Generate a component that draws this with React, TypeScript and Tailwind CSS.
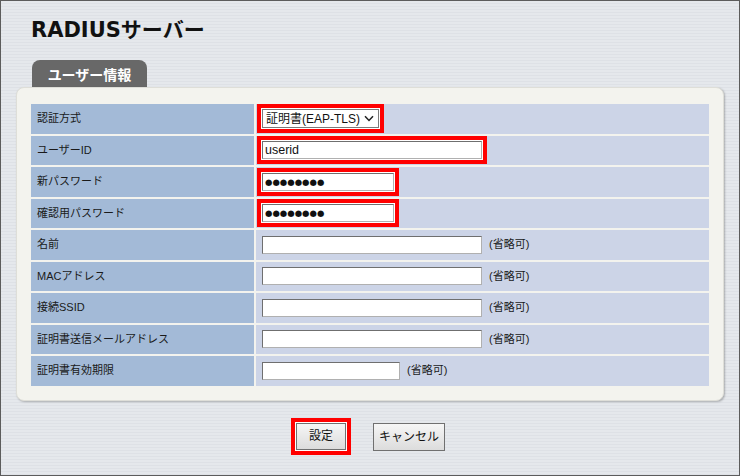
import React from 'react';

type Row = {
  label: string;
  kind: 'select' | 'text' | 'password';
  value?: string;
  width: string;
  marked?: boolean;
  optional?: boolean;
};

const rows: Row[] = [
  { label: '認証方式', kind: 'select', value: '証明書(EAP-TLS)', width: 'w-[117px]', marked: true },
  { label: 'ユーザーID', kind: 'text', value: 'userid', width: 'w-[220px]', marked: true },
  { label: '新パスワード', kind: 'password', value: '●●●●●●●●', width: 'w-[132px]', marked: true },
  { label: '確認用パスワード', kind: 'password', value: '●●●●●●●●', width: 'w-[132px]', marked: true },
  { label: '名前', kind: 'text', width: 'w-[220px]', optional: true },
  { label: 'MACアドレス', kind: 'text', width: 'w-[220px]', optional: true },
  { label: '接続SSID', kind: 'text', width: 'w-[220px]', optional: true },
  { label: '証明書送信メールアドレス', kind: 'text', width: 'w-[220px]', optional: true },
  { label: '証明書有効期限', kind: 'text', width: 'w-[138px]', optional: true },
];

// red highlight drawn round a control, without moving it
const redRing = 'shadow-[0_0_0_1px_#ffffff,0_0_0_5px_#ff0000]';

const FieldControl: React.FC<{ row: Row }> = ({ row }) => {
  const ring = row.marked ? redRing : '';

  if (row.kind === 'select') {
    return (
      <div
        className={`${row.width} h-[19px] flex items-center justify-between bg-white border border-[#7a7a7a] pl-[3px] pr-[4px] text-[12px] leading-none text-[#111] ${ring}`}
      >
        <span>{row.value}</span>
        <svg width="10" height="7" viewBox="0 0 10 7" fill="none">
          <path d="M1 1.2 L5 5.5 L9 1.2" stroke="#222" strokeWidth="1.5" />
        </svg>
      </div>
    );
  }

  const dots = row.kind === 'password';
  return (
    <input
      type="text"
      defaultValue={row.value ?? ''}
      readOnly
      className={`${row.width} h-[18px] bg-white border border-[#6f6f6f] border-r-[#b0b0b0] border-b-[#b0b0b0] px-[2px] outline-none text-[#111] ${
        dots ? "text-[8.5px] font-['DejaVu_Sans',sans-serif]" : 'text-[12.5px]'
      } ${ring}`}
    />
  );
};

export default function App() {
  return (
    <div className="w-[740px] h-[476px] border border-[#5c5c5c] bg-[#e3e6eb] bg-[repeating-linear-gradient(180deg,#e5e8ec_0px,#e5e8ec_2px,#dee1e6_2px,#dee1e6_3px)] font-['Liberation_Sans','Noto_Sans_CJK_JP',sans-serif] text-[#222] overflow-hidden">
      {/* Title */}
      <h1 className="ml-[30px] mt-[15px] h-[28px] leading-[28px] text-[21px] font-bold text-[#111] font-['DejaVu_Sans','Noto_Sans_CJK_JP',sans-serif]">
        RADIUSサーバー
      </h1>

      <div className="mx-[15px] mt-[16px]">
        {/* Tab */}
        <div className="ml-[16px] w-[115px] h-[27px] rounded-t-[8px] bg-[#686868] text-white font-bold text-[14px] leading-none flex items-center justify-center font-['Noto_Sans_CJK_JP',sans-serif]">
          ユーザー情報
        </div>

        {/* Panel */}
        <div className="rounded-[8px] bg-[#f3f3ee] border border-[#deded8] shadow-[1px_1px_2px_rgba(0,0,0,0.25)] px-[14px] pt-[16px] pb-[14px]">
          <div className="grid grid-cols-[223px_1fr] gap-[2px]">
            {rows.map((row) => (
              <React.Fragment key={row.label}>
                <div className="h-[29.5px] bg-[#a3bad7] flex items-center pl-[6px] text-[11px] leading-none text-[#1a1a1a]">
                  {row.label}
                </div>
                <div className="h-[29.5px] bg-[#ccd4e7] flex items-center pl-[6px]">
                  <FieldControl row={row} />
                  {row.optional && (
                    <span className="ml-[7px] text-[11px] leading-none text-[#1a1a1a]">(省略可)</span>
                  )}
                </div>
              </React.Fragment>
            ))}
          </div>
        </div>
      </div>

      {/* Buttons */}
      <div className="mt-[22px] flex justify-center gap-[27px] pl-[1px]">
        <button
          className={`w-[50px] h-[27px] border border-[#707070] bg-gradient-to-b from-[#f6f6f6] to-[#dcdcdc] text-[12px] leading-none text-[#111] ${redRing}`}
        >
          設定
        </button>
        <button className="w-[72px] h-[28px] border border-[#707070] bg-gradient-to-b from-[#f6f6f6] to-[#dcdcdc] text-[12px] leading-none text-[#111]">
          キャンセル
        </button>
      </div>
    </div>
  );
}
